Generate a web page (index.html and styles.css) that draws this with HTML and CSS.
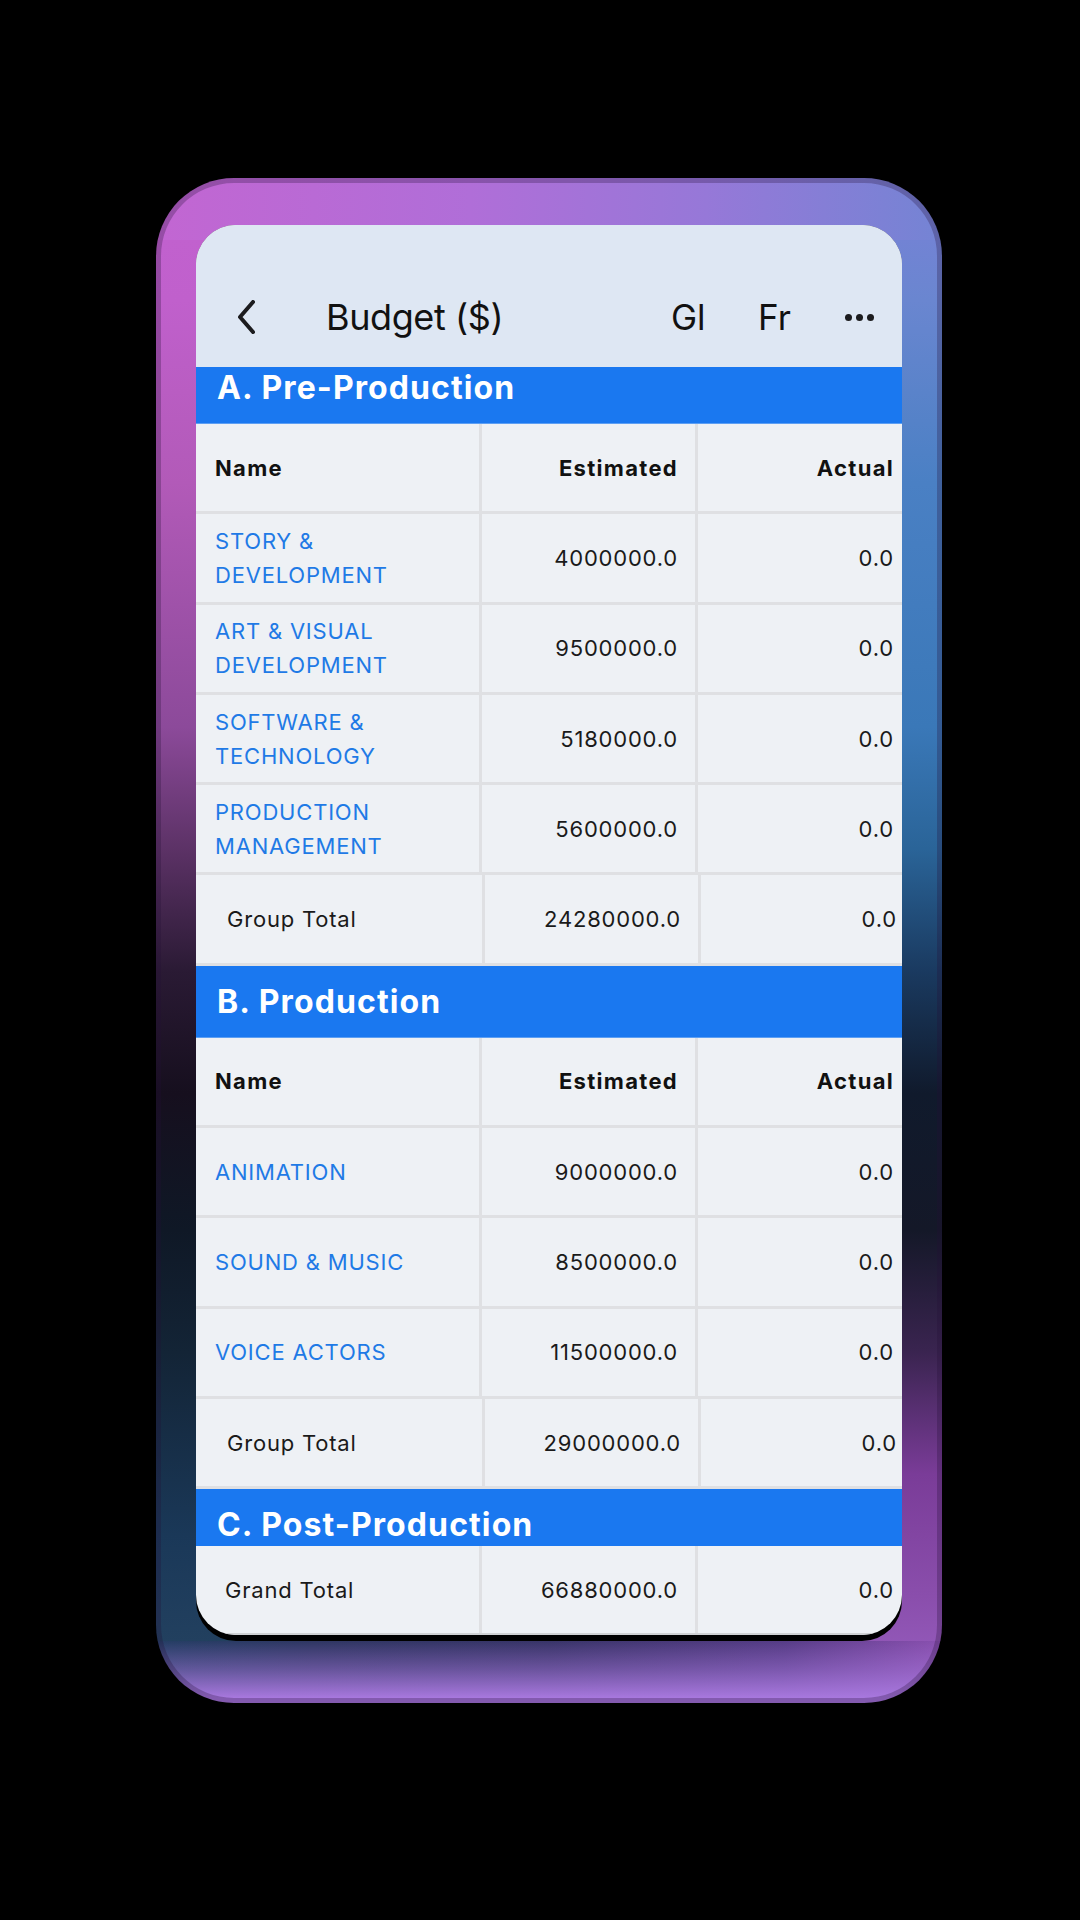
FILE: index.html
```html
<!DOCTYPE html>
<html lang="en">
<head>
    <meta charset="UTF-8">
    <meta name="viewport" content="width=device-width, initial-scale=1.0">
    <title>Budget ($)</title>
    <link rel="stylesheet" href="styles.css">
</head>
<body>
    <div class="device">
        <div class="screen">
            <div class="app">
                <header class="navbar">
                    <button class="back" aria-label="Back">
                        <svg width="18" height="34" viewBox="0 0 18 34">
                            <path d="M16 2 L3 17 L16 32" fill="none" stroke="#1c1c1e" stroke-width="4" stroke-linecap="round" stroke-linejoin="round"/>
                        </svg>
                    </button>
                    <h1 class="title">Budget ($)</h1>
                    <div class="actions">
                        <span class="action">Gl</span>
                        <span class="action">Fr</span>
                        <span class="more"><i></i><i></i><i></i></span>
                    </div>
                </header>

                <div class="scroller">
                    <div class="sheet">
                        <section class="group">
                            <h2 class="group-title">A. Pre-Production</h2>
                            <div class="row head">
                                <div class="cell">Name</div>
                                <div class="cell num">Estimated</div>
                                <div class="cell num">Actual</div>
                            </div>
                            <div class="row">
                                <div class="cell name"><a href="#">STORY &amp; DEVELOPMENT</a></div>
                                <div class="cell num">4000000.0</div>
                                <div class="cell num">0.0</div>
                            </div>
                            <div class="row">
                                <div class="cell name"><a href="#">ART &amp; VISUAL DEVELOPMENT</a></div>
                                <div class="cell num">9500000.0</div>
                                <div class="cell num">0.0</div>
                            </div>
                            <div class="row">
                                <div class="cell name"><a href="#">SOFTWARE &amp; TECHNOLOGY</a></div>
                                <div class="cell num">5180000.0</div>
                                <div class="cell num">0.0</div>
                            </div>
                            <div class="row">
                                <div class="cell name"><a href="#">PRODUCTION MANAGEMENT</a></div>
                                <div class="cell num">5600000.0</div>
                                <div class="cell num">0.0</div>
                            </div>
                            <div class="row subtotal">
                                <div class="cell">Group Total</div>
                                <div class="cell num">24280000.0</div>
                                <div class="cell num">0.0</div>
                            </div>
                        </section>

                        <section class="group">
                            <h2 class="group-title">B. Production</h2>
                            <div class="row head">
                                <div class="cell">Name</div>
                                <div class="cell num">Estimated</div>
                                <div class="cell num">Actual</div>
                            </div>
                            <div class="row">
                                <div class="cell name"><a href="#">ANIMATION</a></div>
                                <div class="cell num">9000000.0</div>
                                <div class="cell num">0.0</div>
                            </div>
                            <div class="row">
                                <div class="cell name"><a href="#">SOUND &amp; MUSIC</a></div>
                                <div class="cell num">8500000.0</div>
                                <div class="cell num">0.0</div>
                            </div>
                            <div class="row">
                                <div class="cell name"><a href="#">VOICE ACTORS</a></div>
                                <div class="cell num">11500000.0</div>
                                <div class="cell num">0.0</div>
                            </div>
                            <div class="row subtotal">
                                <div class="cell">Group Total</div>
                                <div class="cell num">29000000.0</div>
                                <div class="cell num">0.0</div>
                            </div>
                        </section>

                        <section class="group">
                            <h2 class="group-title">C. Post-Production</h2>
                        </section>
                    </div>
                </div>

                <div class="row grand">
                    <div class="cell">Grand Total</div>
                    <div class="cell num">66880000.0</div>
                    <div class="cell num">0.0</div>
                </div>
            </div>
        </div>
    </div>
</body>
</html>
```

FILE: styles.css
```css
html, body {
    margin: 0;
    background: #000;
}
body {
    width: 1080px;
    height: 1920px;
    overflow: hidden;
    font-family: Inter, "Noto Sans", sans-serif;
}

/* phone shell: top band, bottom band, then left and right halves */
.device {
    box-sizing: border-box;
    width: 786px;
    height: 1525px;
    margin: 178px 0 0 156px;
    padding: 42px 35px 57px;
    border: 5px solid rgba(35, 15, 55, 0.28);
    border-radius: 78px;
    background-origin: border-box;
    background-repeat: no-repeat;
    background-image:
        linear-gradient(to right, #c266d2, #b06ed8 40%, #9678d8 70%, #7484d4),
        linear-gradient(to bottom, rgba(168, 120, 222, 0) 0%, rgba(168, 120, 222, 0.45) 45%, #a878de 92%),
        linear-gradient(to right, #243e64 0%, #2e3662 20%, #383468 50%, #563c86 80%, #8a50b0 100%),
        linear-gradient(to bottom, #c262d0 0%, #c060cc 8%, #b25ab8 20%, #8c4a9a 36%, #5c3266 44%, #2a1a34 52%, #160f1e 60%, #0f1826 69%, #132436 77%, #1a3858 89%, #22405f 96%, #2a4470 100%),
        linear-gradient(to bottom, #7a80d8 0%, #6a86d0 8%, #4a80c4 20%, #3a78b8 36%, #2a6498 44%, #1a3a60 52%, #101a2c 60%, #141828 69%, #3a2450 77%, #7a3c98 85%, #8a4eac 93%, #9a62c4 100%);
    background-size: 100% 62px, 100% 62px, 100% 62px, 50% 100%, 50% 100%;
    background-position: top left, bottom left, bottom left, left top, right top;
}
.screen {
    height: 100%;
    border-radius: 40px;
    overflow: hidden;
    background: #000;
}
.app {
    height: calc(100% - 6px);
    display: flex;
    flex-direction: column;
    background: #eef1f5;
    border-radius: 0 0 40px 40px;
    overflow: hidden;
    color: #161616;
}

/* top bar */
.navbar {
    box-sizing: border-box;
    height: 142px;
    padding: 42px 28px 0 41px;
    display: flex;
    align-items: center;
    background: #dee7f3;
    flex-shrink: 0;
}
.back {
    width: 18px;
    height: 34px;
    padding: 0;
    margin-right: 71px;
    border: none;
    background: none;
    display: flex;
}
.title {
    flex: 1;
    margin: 0;
    font-size: 36px;
    font-weight: 400;
    letter-spacing: -0.4px;
    color: #111;
}
.actions {
    display: flex;
    align-items: center;
}
.action {
    width: 87px;
    font-size: 35px;
    color: #111;
}
.more {
    display: flex;
    gap: 4px;
}
.more i {
    width: 7px;
    height: 7px;
    border-radius: 50%;
    background: #1c1c1e;
}

/* scrolled table area */
.scroller {
    flex: 1;
    overflow: hidden;
}
.sheet {
    margin-top: -15px;
}
.group-title {
    box-sizing: border-box;
    height: 72px;
    margin: 0;
    padding-left: 21px;
    display: flex;
    align-items: center;
    background: #1a78f0;
    border-bottom: 1px solid #5d9ff3;
    color: #fff;
    font-size: 32px;
    font-weight: 700;
    letter-spacing: 1.1px;
}

.row {
    display: grid;
    grid-template-columns: 286px 216px 213px;
    height: 90.3px;
    box-sizing: border-box;
    border-bottom: 3px solid #dfe0e3;
    font-size: 22px;
    letter-spacing: 0.8px;
}
.cell {
    display: flex;
    align-items: center;
    padding: 0 17px 0 19px;
    border-right: 3px solid #dfe0e3;
    line-height: 34px;
    color: #1a1a1a;
}
.cell:last-child {
    border-right: none;
}
.cell.num {
    justify-content: flex-end;
}
.head .cell {
    font-weight: 700;
    color: #111;
    letter-spacing: 1.3px;
}
.name a {
    color: #1f7ae6;
    text-decoration: none;
}
.subtotal {
    grid-template-columns: 289px 216px 213px;
}
.subtotal .cell:first-child {
    padding-left: 31px;
}
.grand {
    flex-shrink: 0;
    height: 89px;
    border-bottom: 2px solid #cfd1d4;
}
.grand .cell:first-child {
    padding-left: 29px;
}
```
